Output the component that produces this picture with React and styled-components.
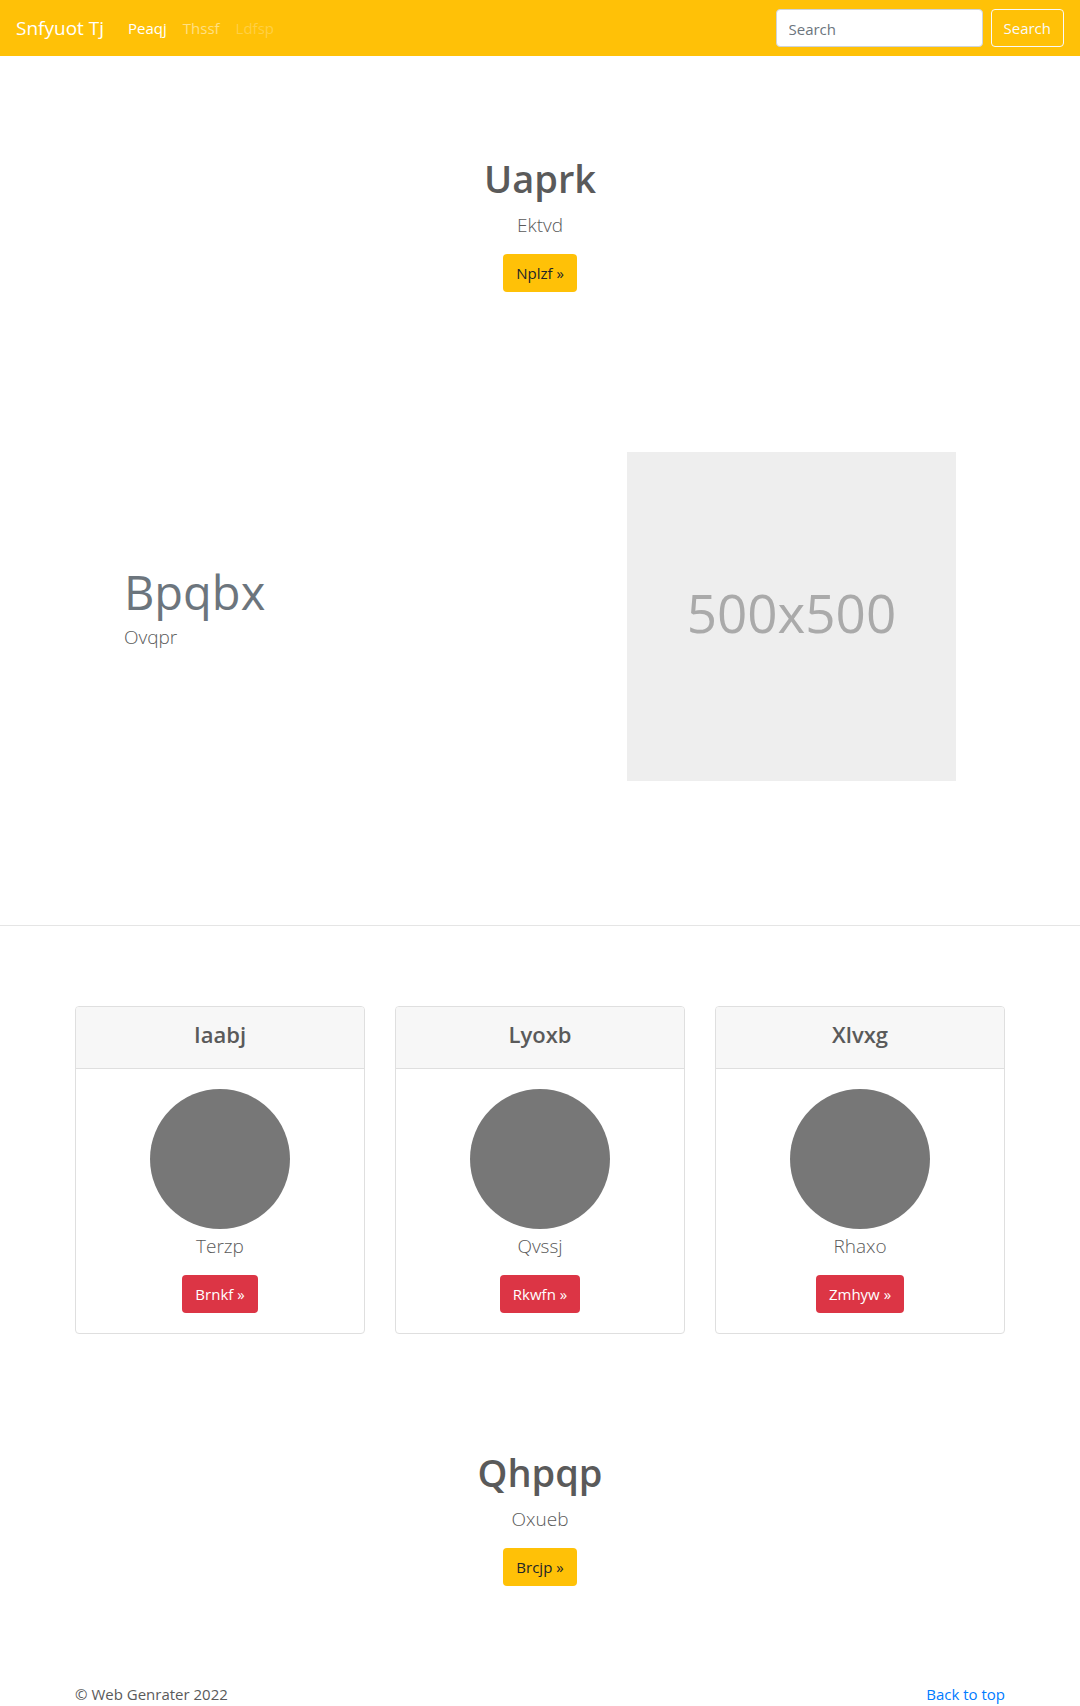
import React from "react";
import styled, { createGlobalStyle } from "styled-components";

const GlobalStyle = createGlobalStyle`
  *, *::before, *::after { box-sizing: border-box; }
  body {
    margin: 0;
    background: #fff;
    color: #5a5a5a;
    font-family: "Segoe UI", "Open Sans", "Noto Sans", sans-serif;
    font-size: 15px;
    line-height: 24px;
  }
  h1, h2, h3, p { margin: 0; }
`;

const Navbar = styled.header`
  display: flex;
  align-items: center;
  height: 56px;
  padding: 0 16px;
  background: #ffc107;
`;

const Brand = styled.a`
  margin-right: 24px;
  color: #fff;
  font-size: 19px;
  line-height: 30px;
  text-decoration: none;
`;

const NavLinks = styled.nav`
  display: flex;
  flex: 1;
  gap: 16px;
`;

const NavLink = styled.a`
  color: rgba(255, 255, 255, ${({ $strength }) => $strength});
  text-decoration: none;
`;

const SearchForm = styled.form`
  display: flex;
  gap: 8px;
`;

const SearchInput = styled.input`
  width: 207px;
  height: 38px;
  padding: 7px 12px 5px;
  border: 1px solid #ced4da;
  border-radius: 4px;
  background: #fff;
  color: #495057;
  font: inherit;
  &::placeholder { color: #6c757d; opacity: 1; }
`;

const SearchButton = styled.button`
  height: 38px;
  padding: 0 12px;
  border: 1px solid #f8f9fa;
  border-radius: 4px;
  background: transparent;
  color: #f8f9fa;
  font: inherit;
  cursor: pointer;
`;

const Hero = styled.section`
  display: flex;
  flex-direction: column;
  align-items: center;
  padding: 98px 16px 96px;
`;

const HeroTitle = styled.h1`
  margin-bottom: 8px;
  font-size: 38px;
  font-weight: 600;
  line-height: 48px;
`;

const Lead = styled.p`
  font-size: 19px;
  font-weight: 300;
  line-height: 30px;
`;

const tones = {
  warning: { fill: "#ffc107", ink: "#212529" },
  danger: { fill: "#dc3545", ink: "#fff" },
};

const ActionLink = styled.a`
  display: block;
  margin-top: 14px;
  padding: 7px 13px;
  border-radius: 4px;
  background: ${({ $tone }) => tones[$tone].fill};
  color: ${({ $tone }) => tones[$tone].ink};
  text-decoration: none;
`;

const Feature = styled.section`
  display: grid;
  grid-template-columns: 7fr 5fr;
  max-width: 862px;
  margin: 64px auto 144px;
`;

const FeatureText = styled.div`
  padding: 110px 15px 0;
`;

const FeatureTitle = styled.h2`
  color: #6c757d;
  font-size: 47px;
  font-weight: 400;
  line-height: 60px;
`;

const FeatureMedia = styled.div`
  padding: 0 15px;
`;

const Placeholder = styled.div`
  display: flex;
  align-items: center;
  justify-content: center;
  aspect-ratio: 1;
  padding-bottom: 8px;
  background: #eee;
  color: #aaa;
  font-family: "Open Sans", "Noto Sans", sans-serif;
  font-size: 53px;
  line-height: 64px;
`;

const Divider = styled.hr`
  margin: 0 0 80px;
  border: 0;
  border-top: 1px solid #e5e5e5;
`;

const Container = styled.div`
  max-width: 960px;
  margin: 0 auto;
  padding: 0 15px;
`;

const CardDeck = styled.div`
  display: grid;
  grid-template-columns: repeat(3, 1fr);
  gap: 30px;
  margin-bottom: 16px;
`;

const Card = styled.article`
  border: 1px solid #dfdfdf;
  border-radius: 4px;
  overflow: hidden;
`;

const CardHeader = styled.div`
  padding: 13px 20px 19px;
  border-bottom: 1px solid #dfdfdf;
  background: #f7f7f7;
  text-align: center;
`;

const CardTitle = styled.h3`
  font-size: 22px;
  font-weight: 600;
  line-height: 29px;
`;

const CardBody = styled.div`
  display: flex;
  flex-direction: column;
  align-items: center;
  padding: 20px;
`;

const Avatar = styled.div`
  width: 140px;
  height: 140px;
  margin-bottom: 2px;
  border-radius: 50%;
  background: #777;
`;

const Footer = styled.footer`
  display: flex;
  justify-content: space-between;
`;

const TopLink = styled.a`
  color: #007bff;
  text-decoration: none;
`;

const cards = [
  { title: "Iaabj", text: "Terzp", action: "Brnkf »" },
  { title: "Lyoxb", text: "Qvssj", action: "Rkwfn »" },
  { title: "Xlvxg", text: "Rhaxo", action: "Zmhyw »" },
];

function Jumbo({ title, text, action }) {
  return (
    <Hero>
      <HeroTitle>{title}</HeroTitle>
      <Lead>{text}</Lead>
      <ActionLink href="#" $tone="warning">{action}</ActionLink>
    </Hero>
  );
}

export default function App() {
  return (
    <>
      <GlobalStyle />
      <Navbar>
        <Brand href="#">Snfyuot Tj</Brand>
        <NavLinks>
          <NavLink href="#" $strength={1}>Peaqj</NavLink>
          <NavLink href="#" $strength={0.5}>Thssf</NavLink>
          <NavLink href="#" $strength={0.25}>Ldfsp</NavLink>
        </NavLinks>
        <SearchForm onSubmit={(event) => event.preventDefault()}>
          <SearchInput type="search" placeholder="Search" aria-label="Search" />
          <SearchButton type="submit">Search</SearchButton>
        </SearchForm>
      </Navbar>
      <main>
        <Jumbo title="Uaprk" text="Ektvd" action="Nplzf »" />
        <Feature>
          <FeatureText>
            <FeatureTitle>Bpqbx</FeatureTitle>
            <Lead>Ovqpr</Lead>
          </FeatureText>
          <FeatureMedia>
            <Placeholder>500x500</Placeholder>
          </FeatureMedia>
        </Feature>
        <Divider />
        <Container>
          <CardDeck>
            {cards.map((card) => (
              <Card key={card.title}>
                <CardHeader>
                  <CardTitle>{card.title}</CardTitle>
                </CardHeader>
                <CardBody>
                  <Avatar />
                  <Lead>{card.text}</Lead>
                  <ActionLink href="#" $tone="danger">{card.action}</ActionLink>
                </CardBody>
              </Card>
            ))}
          </CardDeck>
        </Container>
        <Jumbo title="Qhpqp" text="Oxueb" action="Brcjp »" />
      </main>
      <Container>
        <Footer>
          <span>© Web Genrater 2022</span>
          <TopLink href="#">Back to top</TopLink>
        </Footer>
      </Container>
    </>
  );
}
